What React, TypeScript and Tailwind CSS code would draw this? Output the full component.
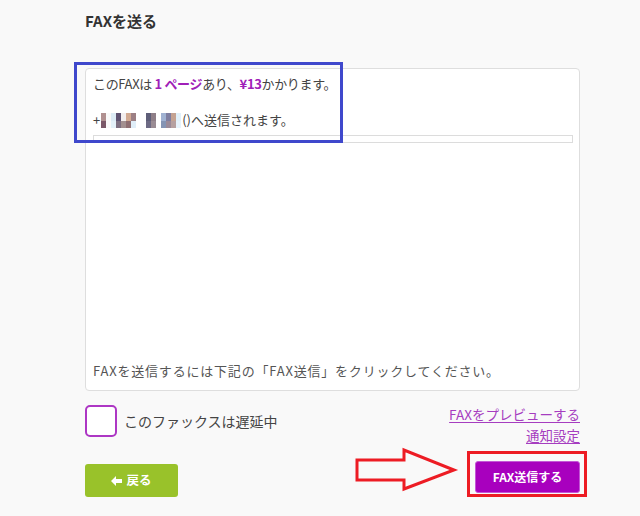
import React from "react";

const mosaic: [number, string, string][] = [
  [5, "#b09090", "#7a5868"],
  [5, "#f9f9f9", "#f9f9f9"],
  [5, "#dcebf5", "#e3f0f8"],
  [5, "#5e5270", "#7d6f80"],
  [5, "#f3eeee", "#a39090"],
  [5, "#d2aa92", "#8f6f72"],
  [5, "#9c7f84", "#e0eef8"],
  [10, "#ffffff", "#ffffff"],
  [5, "#5e5e78", "#6d6a84"],
  [5, "#8f7f88", "#9a8c94"],
  [5, "#ffffff", "#ffffff"],
  [5, "#a0b2d2", "#8494b4"],
  [5, "#7e7ea0", "#9a8a98"],
  [5, "#c4a292", "#b6a0a0"],
  [5, "#e0f0fa", "#e6f2fb"],
];

export default function App() {
  return (
    <div
      className="relative min-h-[516px] w-[640px] bg-[#f9f9f9] text-[#444]"
      style={{ fontFamily: '"Noto Sans CJK JP", "Noto Sans", sans-serif' }}
    >
      <div className="ml-[85px] w-[495px] pt-[10px]">
        <h1 className="text-[15px] font-bold leading-[22px] text-[#333]">FAXを送る</h1>

        <div className="mt-[36px] flex h-[323px] flex-col rounded-[4px] border border-[#dedede] bg-white px-[7px] pt-[5px] pb-[9px]">
          <p className="text-[13px] leading-[20px] tracking-[-0.35px]">
            このFAXは <span className="font-bold text-[#a020b8]">1 ページ</span>あり、
            <span className="font-bold text-[#a020b8]">¥13</span>かかります。
          </p>
          <div className="h-[16px]" />
          <p className="flex items-center text-[13px] leading-[20px]">
            <span>+</span>
            <span className="ml-[1px] flex flex-col">
              <span className="flex">
                {mosaic.map(([w, c], i) => (
                  <span key={i} className="h-[8px]" style={{ width: w, background: c }} />
                ))}
              </span>
              <span className="flex">
                {mosaic.map(([w, , c], i) => (
                  <span key={i} className="h-[7px]" style={{ width: w, background: c }} />
                ))}
              </span>
            </span>
            <span className="ml-[1px]">()へ送信されます。</span>
          </p>
          <div className="mt-[5px] h-[8px] w-[480px] border border-[#dcdcdc] bg-white" />
          <div className="flex-1" />
          <p className="text-[13px] leading-[20px] tracking-[0.8px] text-[#555]">
            FAXを送信するには下記の「FAX送信」をクリックしてください。
          </p>
        </div>

        <div className="mt-[14px] flex items-start justify-between">
          <label className="flex items-center gap-[7px]">
            <span className="block h-[32px] w-[32px] rounded-[5px] border-2 border-[#ad36c4] bg-white" />
            <span className="text-[14px] leading-[20px] text-[#444]">このファックスは遅延中</span>
          </label>
          <div className="-mt-[1px] flex flex-col items-end text-[13.5px] leading-[21px] text-[#a63dc0]">
            <a className="underline underline-offset-2">FAXをプレビューする</a>
            <a className="underline underline-offset-2">通知設定</a>
          </div>
        </div>

        <div className="mt-[14px] flex items-start justify-between">
          <button className="mt-[4px] flex h-[33px] w-[93px] items-center justify-center gap-[4px] rounded-[3px] bg-[#99c22a] text-[12.5px] font-bold text-white">
            <svg width="11" height="10" viewBox="0 0 11 10">
              <path d="M0 5 L5 0 L5 3 L11 3 L11 7 L5 7 L5 10 Z" fill="white" />
            </svg>
            戻る
          </button>
          <button className="mt-[1px] flex h-[32px] w-[105px] items-center justify-center rounded-[3px] border border-[#c456d6] bg-[#a800be] text-[12px] font-bold text-white">
            FAX送信する
          </button>
        </div>
      </div>

      {/* annotations */}
      <div className="pointer-events-none absolute left-[74px] top-[62px] h-[81px] w-[269px] border-[3px] border-[#3f48cc]" />
      <div className="pointer-events-none absolute left-[467px] top-[451px] h-[46px] w-[120px] border-[3px] border-[#ed1c24]" />
      <svg className="pointer-events-none absolute left-0 top-0" width="640" height="516">
        <polygon
          points="357,460 404,460 404,450 454,470 404,489 404,480 357,480"
          fill="none"
          stroke="#ed1c24"
          strokeWidth="3"
          strokeLinejoin="miter"
        />
      </svg>
    </div>
  );
}
